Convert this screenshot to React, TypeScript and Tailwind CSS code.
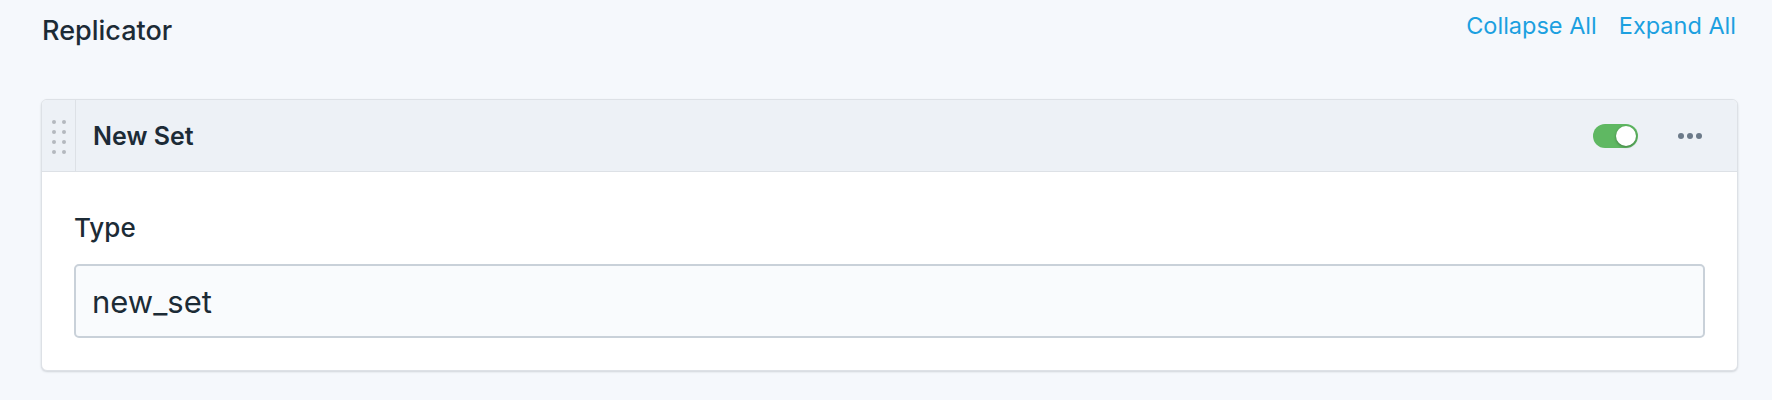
import { useState } from "react"

const font = { fontFamily: "Inter, 'Noto Sans', sans-serif" }

function DragHandle() {
  return (
    <div className="flex w-[34px] shrink-0 items-center justify-center self-stretch border-r border-[#dde1e6] pt-[3px]">
      <div className="grid grid-cols-2 gap-x-[6px] gap-y-[6px]">
        {Array.from({ length: 8 }).map((_, i) => (
          <span key={i} className="block h-[4px] w-[4px] rounded-full bg-[#b4b9bf]" />
        ))}
      </div>
    </div>
  )
}

function Toggle({ on, onChange }: { on: boolean; onChange: () => void }) {
  return (
    <button
      onClick={onChange}
      className={`relative h-[24px] w-[45px] rounded-full transition-colors ${on ? "bg-[#5fb862]" : "bg-[#c4ccd4]"}`}
    >
      <span
        className={`absolute top-[2px] h-[20px] w-[20px] rounded-full bg-white shadow-[0_1px_3px_rgba(0,0,0,0.35)] transition-all ${on ? "left-[23px]" : "left-[2px]"}`}
      />
    </button>
  )
}

export default function App() {
  const [enabled, setEnabled] = useState(true)
  const [value, setValue] = useState("new_set")

  return (
    <div className="min-h-[400px] bg-[#f5f8fc] pl-[41px] pr-[34px] text-[#1c2b36]" style={font}>
      {/* Field header */}
      <div className="flex items-start justify-between pt-[10px]">
        <h1 className="mt-[5px] pl-[1px] text-[27px] leading-[32px] font-medium">Replicator</h1>
        <div className="flex gap-[22px] pr-[2px] text-[23.5px] leading-[32px] text-[#1ca0e0]">
          <button>Collapse All</button>
          <button>Expand All</button>
        </div>
      </div>

      {/* Set card */}
      <div className="mt-[52px] overflow-hidden rounded-[6px] border border-[#dde1e6] bg-white shadow-[0_1px_2px_rgba(40,50,60,0.18)]">
        <div className="flex h-[72px] items-center border-b border-[#dde1e6] bg-[#edf1f6]">
          <DragHandle />
          <span className="flex-1 pl-[17px] text-[25px] leading-[32px] font-semibold">New Set</span>
          <Toggle on={enabled} onChange={() => setEnabled(!enabled)} />
          <button className="ml-[40px] mr-[35px] flex gap-[3px]">
            <span className="block h-[6px] w-[6px] rounded-full bg-[#6c7a89]" />
            <span className="block h-[6px] w-[6px] rounded-full bg-[#6c7a89]" />
            <span className="block h-[6px] w-[6px] rounded-full bg-[#6c7a89]" />
          </button>
        </div>

        <div className="px-[32px] pt-[40px] pb-[32px]">
          <label className="block text-[26px] leading-[32px] font-medium">Type</label>
          <input
            value={value}
            onChange={(e) => setValue(e.target.value)}
            className="mt-[20px] block h-[74px] w-full rounded-[5px] border-2 border-[#c9d1d9] bg-[#f9fbfd] pl-[16px] text-[31px] text-[#1c2b36] outline-none"
            style={font}
          />
        </div>
      </div>
    </div>
  )
}
